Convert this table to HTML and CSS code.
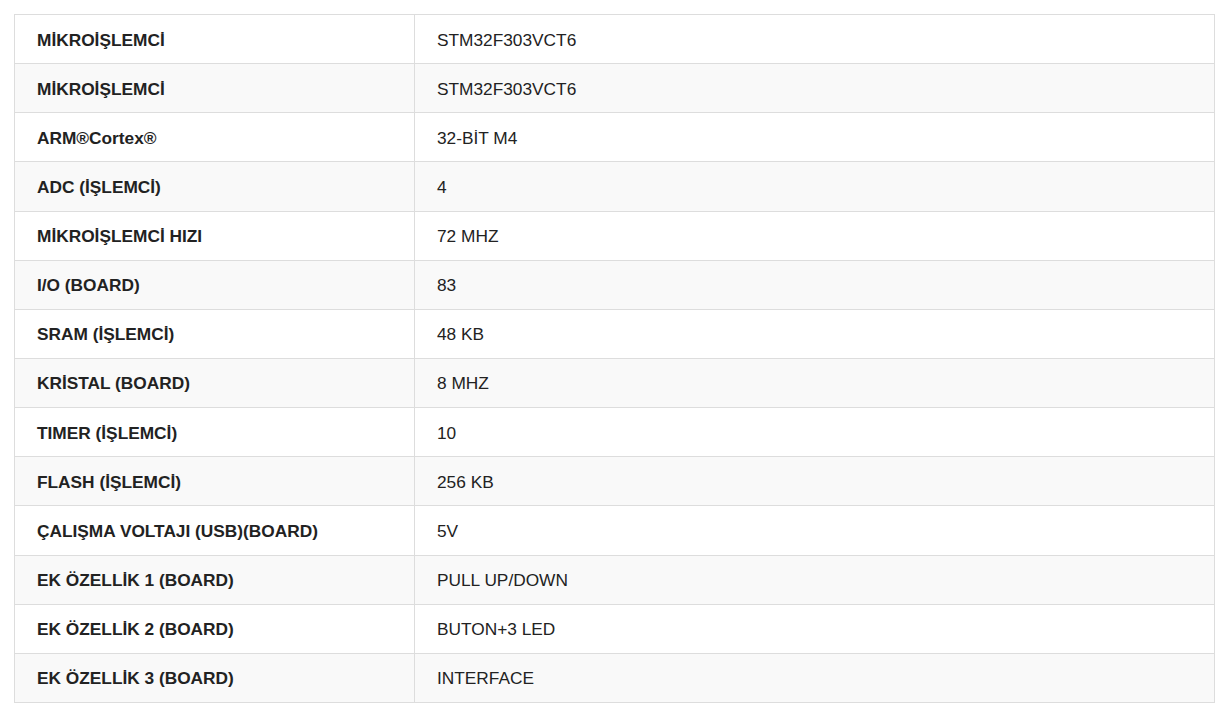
FILE: index.html
```html
<!DOCTYPE html>
<html lang="tr">
<head>
<meta charset="utf-8">
<link rel="stylesheet" href="styles.css">
</head>
<body>
<table class="spec">
<tbody>
<tr><th>MİKROİŞLEMCİ</th><td>STM32F303VCT6</td></tr>
<tr><th>MİKROİŞLEMCİ</th><td>STM32F303VCT6</td></tr>
<tr><th>ARM®Cortex®</th><td>32-BİT M4</td></tr>
<tr><th>ADC (İŞLEMCİ)</th><td>4</td></tr>
<tr><th>MİKROİŞLEMCİ HIZI</th><td>72 MHZ</td></tr>
<tr><th>I/O (BOARD)</th><td>83</td></tr>
<tr><th>SRAM (İŞLEMCİ)</th><td>48 KB</td></tr>
<tr><th>KRİSTAL (BOARD)</th><td>8 MHZ</td></tr>
<tr><th>TIMER (İŞLEMCİ)</th><td>10</td></tr>
<tr><th>FLASH (İŞLEMCİ)</th><td>256 KB</td></tr>
<tr><th>ÇALIŞMA VOLTAJI (USB)(BOARD)</th><td>5V</td></tr>
<tr><th>EK ÖZELLİK 1 (BOARD)</th><td>PULL UP/DOWN</td></tr>
<tr><th>EK ÖZELLİK 2 (BOARD)</th><td>BUTON+3 LED</td></tr>
<tr><th>EK ÖZELLİK 3 (BOARD)</th><td>INTERFACE</td></tr>
</tbody>
</table>
</body>
</html>
```
FILE: styles.css
```css
html, body {
  margin: 0;
  padding: 0;
  background: #fff;
}
body {
  padding: 14px;
  font-family: "Liberation Sans", Arial, sans-serif;
  color: #222;
}
.spec {
  border-collapse: collapse;
  width: 1201px;
  table-layout: fixed;
  font-size: 17.3px;
}
.spec th,
.spec td {
  border: 1px solid #ddd;
  padding: 15.5px 22px 14.5px;
  line-height: 18.14px;
  height: 18.14px;
  text-align: left;
  vertical-align: middle;
}
.spec th {
  width: 355px;
  font-weight: bold;
  color: #222;
}
.spec td {
  font-weight: normal;
  color: #222;
}
.spec tr:nth-child(even) th,
.spec tr:nth-child(even) td {
  background: #f9f9f9;
}
```
